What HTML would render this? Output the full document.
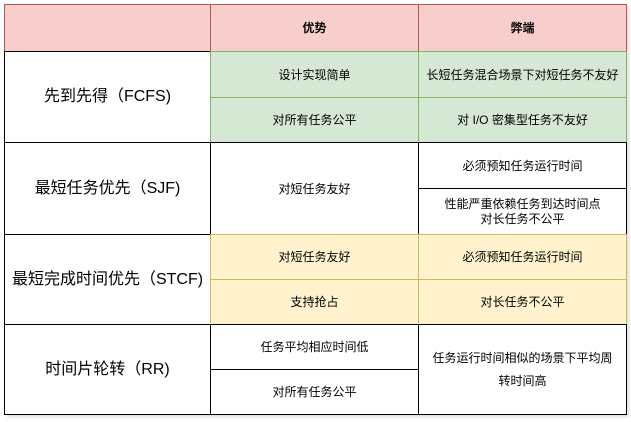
<!DOCTYPE html>
<html><head><meta charset="utf-8"><style>
body{margin:0;width:631px;height:422px;background:#fff;position:relative;overflow:hidden;font-family:"Liberation Sans","Noto Sans CJK SC",sans-serif;color:#000}
.c{position:absolute;box-sizing:border-box;display:flex;align-items:center;justify-content:center;text-align:center;font-size:12px;line-height:18px}
.big{font-size:16px}
.w{background:#fff;border:1px solid #000}
.r{background:#f8cecc;border:1px solid #b85450}
.g{background:#d5e8d4;border:1px solid #82b366}
.y{background:#fff2cc;border:1px solid #d6b656}
.sh{position:absolute;left:7px;top:7px;width:622px;height:410px;background:#ddd;filter:blur(1.5px)}
</style></head><body>
<div class="sh"></div>
<div class="c r" style="left:4px;top:4px;width:207px;height:48px"></div>
<div class="c r" style="left:210px;top:4px;width:209px;height:48px;font-weight:bold">优势</div>
<div class="c r" style="left:418px;top:4px;width:209px;height:48px;font-weight:bold">弊端</div>

<div class="c w big" style="left:4px;top:51px;width:207px;height:92px">先到先得（FCFS)</div>
<div class="c g" style="left:210px;top:51px;width:209px;height:47px">设计实现简单</div>
<div class="c g" style="left:418px;top:51px;width:209px;height:47px">长短任务混合场景下对短任务不友好</div>
<div class="c g" style="left:210px;top:97px;width:209px;height:46px">对所有任务公平</div>
<div class="c g" style="left:418px;top:97px;width:209px;height:46px">对 I/O 密集型任务不友好</div>

<div class="c w big" style="left:4px;top:142px;width:207px;height:93px">最短任务优先（SJF)</div>
<div class="c w" style="left:210px;top:142px;width:209px;height:93px">对短任务友好</div>
<div class="c w" style="left:418px;top:142px;width:209px;height:47px">必须预知任务运行时间</div>
<div class="c w" style="left:418px;top:188px;width:209px;height:47px;line-height:15px">性能严重依赖任务到达时间点<br>对长任务不公平</div>

<div class="c w big" style="left:4px;top:234px;width:207px;height:91px">最短完成时间优先（STCF)</div>
<div class="c y" style="left:210px;top:234px;width:209px;height:46px">对短任务友好</div>
<div class="c y" style="left:418px;top:234px;width:209px;height:46px">必须预知任务运行时间</div>
<div class="c y" style="left:210px;top:279px;width:209px;height:46px">支持抢占</div>
<div class="c y" style="left:418px;top:279px;width:209px;height:46px">对长任务不公平</div>

<div class="c w big" style="left:4px;top:324px;width:207px;height:91px">时间片轮转（RR)</div>
<div class="c w" style="left:210px;top:324px;width:209px;height:46px">任务平均相应时间低</div>
<div class="c w" style="left:210px;top:369px;width:209px;height:46px">对所有任务公平</div>
<div class="c w" style="left:418px;top:324px;width:209px;height:91px;line-height:23px;padding:0 8px">任务运行时间相似的场景下平均周转时间高</div>
</body></html>
